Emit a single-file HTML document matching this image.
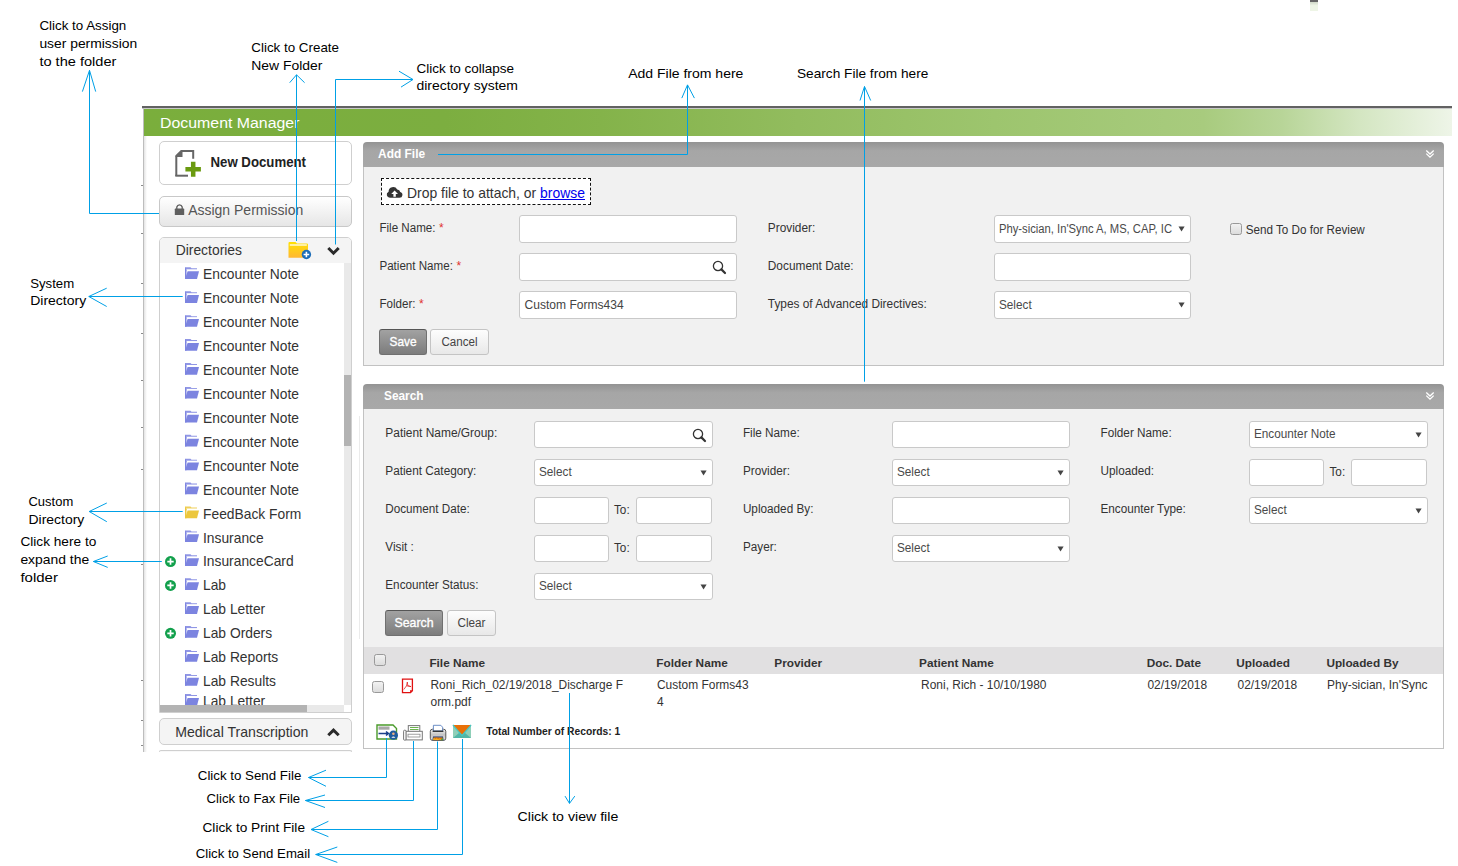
<!DOCTYPE html>
<html><head><meta charset="utf-8"><style>
html,body{margin:0;padding:0;width:1458px;height:866px;overflow:hidden;background:#fff}
body{position:relative;font-family:"Liberation Sans",sans-serif}
svg{font-family:"Liberation Sans",sans-serif}
.a{position:absolute}
</style></head><body>
<div class="a" style="left:1310px;top:0px;width:8px;height:2px;background:#666"></div>
<div class="a" style="left:1310px;top:2px;width:8px;height:9px;background:linear-gradient(#d0d8c8,#eef5e6 40%)"></div>
<div class="a" style="left:142px;top:106px;width:1310px;height:2px;background:#626262"></div>
<div class="a" style="left:142px;top:108px;width:1310px;height:1px;background:#c8c8c8"></div>
<div class="a" style="left:144px;top:109px;width:1308px;height:27px;background:linear-gradient(90deg,#7aae3c 0%,#7cae40 23%,#84b34a 35%,#92bc5e 50%,#9dc56e 65%,#a8cb7e 81%,#b8d598 87%,#d4e6c2 93%,#eef5e8 100%)"></div>
<div class="a" style="left:143px;top:108px;width:1px;height:644px;background:#bdbdbd"></div>
<div class="a" style="left:144px;top:136px;width:3px;height:616px;background:linear-gradient(90deg,#e4e4e4,#fff)"></div>
<div class="a" style="left:141px;top:185px;width:2px;height:1px;background:#8a8a8a"></div>
<div class="a" style="left:141px;top:233px;width:2px;height:1px;background:#8a8a8a"></div>
<div class="a" style="left:141px;top:283px;width:2px;height:1px;background:#8a8a8a"></div>
<div class="a" style="left:141px;top:333px;width:2px;height:1px;background:#8a8a8a"></div>
<div class="a" style="left:141px;top:380px;width:2px;height:1px;background:#8a8a8a"></div>
<div class="a" style="left:141px;top:427px;width:2px;height:1px;background:#8a8a8a"></div>
<div class="a" style="left:141px;top:469px;width:2px;height:1px;background:#8a8a8a"></div>
<div class="a" style="left:141px;top:564px;width:2px;height:1px;background:#8a8a8a"></div>
<div class="a" style="left:141px;top:680px;width:2px;height:1px;background:#8a8a8a"></div>
<div class="a" style="left:141px;top:720px;width:2px;height:1px;background:#8a8a8a"></div>
<div class="a" style="left:141px;top:745px;width:2px;height:1px;background:#8a8a8a"></div>
<div class="a" style="left:159px;top:141px;width:193px;height:44px;box-sizing:border-box;border:1px solid #cfcfcf;border-radius:5px;background:#fff"></div>
<svg class="a" style="left:170px;top:145px" width="40" height="35" viewBox="170 145 40 35">
<path d="M176.3 176 V156 L181.3 151 H193.2 V158.7" fill="none" stroke="#666" stroke-width="2"/>
<path d="M175.3 175.7 H188" stroke="#666" stroke-width="2"/>
<path d="M175.5 156.5 L181 151 L182.5 151 V157 H175.5Z" fill="#666"/>
<path d="M193.2 161.8 V176.7 M185.4 169.2 H200.9" stroke="#6a9a10" stroke-width="4.5"/>
</svg>
<div class="a" style="left:159px;top:196px;width:193px;height:31px;box-sizing:border-box;border:1px solid #c8c8c8;border-radius:5px;background:linear-gradient(#ffffff,#e6e6e6)"></div>
<svg class="a" style="left:172px;top:202px" width="16" height="16" viewBox="172 202 16 16">
<path d="M176.8 209 V207 A2.8 2.8 0 0 1 182.2 207 V209" fill="none" stroke="#5c5c5c" stroke-width="1.3"/>
<rect x="174.8" y="208.6" width="9.4" height="6.4" rx="0.6" fill="#5f5f5f"/>
</svg>
<div class="a" style="left:159px;top:237px;width:193px;height:476px;box-sizing:border-box;border:1px solid #cfcfcf;border-radius:5px 5px 0 0;background:#fff"></div>
<div class="a" style="left:160px;top:238px;width:191px;height:25px;background:#f4f4f4;border-radius:4px 4px 0 0"></div>
<svg class="a" style="left:286px;top:240px" width="28" height="22" viewBox="286 240 28 22">
<defs><linearGradient id="fy" x1="0" y1="0" x2="0" y2="1"><stop offset="0" stop-color="#ffe100"/><stop offset="1" stop-color="#ffb733"/></linearGradient></defs>
<path d="M288.5 243 Q288.5 242 289.5 242 H295.5 L297 243.5 H307 Q308 243.5 308 244.5 V257.8 H288.5Z" fill="url(#fy)"/>
<rect x="289.8" y="244.2" width="17" height="1.6" fill="#fff6c8"/>
<circle cx="306.4" cy="254.5" r="4.7" fill="#1b6cb8"/>
<path d="M306.4 251.7 V257.3 M303.6 254.5 H309.2" stroke="#fff" stroke-width="1.6"/>
</svg>
<svg class="a" style="left:325px;top:244px" width="18" height="14" viewBox="325 244 18 14">
<path d="M328.3 248 L333.5 253.2 L338.7 248" fill="none" stroke="#2a2a2a" stroke-width="3"/>
</svg>
<svg class="a" style="left:160px;top:263px" width="184" height="442" viewBox="160 263 184 442">
<g transform="translate(185,267.00)">
<path d="M0 0.3 H5.5 L6.5 1.3 H12 V4 H0Z" fill="#7c84e0" opacity="0.85"/>
<path d="M1.3 2.3 H12.5 V5 H1.3Z" fill="#fff"/>
<path d="M0 0.3 V12 H1.5 V3 Z" fill="#7c84e0"/>
<path d="M2.6 4.2 H14 L12 12 H0 Z" fill="#7c84e0"/>
</g>
<text x="203" y="279.40" font-size="14.3" fill="#333" textLength="96.03" lengthAdjust="spacingAndGlyphs">Encounter Note</text>
<g transform="translate(185,290.92)">
<path d="M0 0.3 H5.5 L6.5 1.3 H12 V4 H0Z" fill="#7c84e0" opacity="0.85"/>
<path d="M1.3 2.3 H12.5 V5 H1.3Z" fill="#fff"/>
<path d="M0 0.3 V12 H1.5 V3 Z" fill="#7c84e0"/>
<path d="M2.6 4.2 H14 L12 12 H0 Z" fill="#7c84e0"/>
</g>
<text x="203" y="303.32" font-size="14.3" fill="#333" textLength="96.03" lengthAdjust="spacingAndGlyphs">Encounter Note</text>
<g transform="translate(185,314.84)">
<path d="M0 0.3 H5.5 L6.5 1.3 H12 V4 H0Z" fill="#7c84e0" opacity="0.85"/>
<path d="M1.3 2.3 H12.5 V5 H1.3Z" fill="#fff"/>
<path d="M0 0.3 V12 H1.5 V3 Z" fill="#7c84e0"/>
<path d="M2.6 4.2 H14 L12 12 H0 Z" fill="#7c84e0"/>
</g>
<text x="203" y="327.24" font-size="14.3" fill="#333" textLength="96.03" lengthAdjust="spacingAndGlyphs">Encounter Note</text>
<g transform="translate(185,338.76)">
<path d="M0 0.3 H5.5 L6.5 1.3 H12 V4 H0Z" fill="#7c84e0" opacity="0.85"/>
<path d="M1.3 2.3 H12.5 V5 H1.3Z" fill="#fff"/>
<path d="M0 0.3 V12 H1.5 V3 Z" fill="#7c84e0"/>
<path d="M2.6 4.2 H14 L12 12 H0 Z" fill="#7c84e0"/>
</g>
<text x="203" y="351.16" font-size="14.3" fill="#333" textLength="96.03" lengthAdjust="spacingAndGlyphs">Encounter Note</text>
<g transform="translate(185,362.68)">
<path d="M0 0.3 H5.5 L6.5 1.3 H12 V4 H0Z" fill="#7c84e0" opacity="0.85"/>
<path d="M1.3 2.3 H12.5 V5 H1.3Z" fill="#fff"/>
<path d="M0 0.3 V12 H1.5 V3 Z" fill="#7c84e0"/>
<path d="M2.6 4.2 H14 L12 12 H0 Z" fill="#7c84e0"/>
</g>
<text x="203" y="375.08" font-size="14.3" fill="#333" textLength="96.03" lengthAdjust="spacingAndGlyphs">Encounter Note</text>
<g transform="translate(185,386.60)">
<path d="M0 0.3 H5.5 L6.5 1.3 H12 V4 H0Z" fill="#7c84e0" opacity="0.85"/>
<path d="M1.3 2.3 H12.5 V5 H1.3Z" fill="#fff"/>
<path d="M0 0.3 V12 H1.5 V3 Z" fill="#7c84e0"/>
<path d="M2.6 4.2 H14 L12 12 H0 Z" fill="#7c84e0"/>
</g>
<text x="203" y="399.00" font-size="14.3" fill="#333" textLength="96.03" lengthAdjust="spacingAndGlyphs">Encounter Note</text>
<g transform="translate(185,410.52)">
<path d="M0 0.3 H5.5 L6.5 1.3 H12 V4 H0Z" fill="#7c84e0" opacity="0.85"/>
<path d="M1.3 2.3 H12.5 V5 H1.3Z" fill="#fff"/>
<path d="M0 0.3 V12 H1.5 V3 Z" fill="#7c84e0"/>
<path d="M2.6 4.2 H14 L12 12 H0 Z" fill="#7c84e0"/>
</g>
<text x="203" y="422.92" font-size="14.3" fill="#333" textLength="96.03" lengthAdjust="spacingAndGlyphs">Encounter Note</text>
<g transform="translate(185,434.44)">
<path d="M0 0.3 H5.5 L6.5 1.3 H12 V4 H0Z" fill="#7c84e0" opacity="0.85"/>
<path d="M1.3 2.3 H12.5 V5 H1.3Z" fill="#fff"/>
<path d="M0 0.3 V12 H1.5 V3 Z" fill="#7c84e0"/>
<path d="M2.6 4.2 H14 L12 12 H0 Z" fill="#7c84e0"/>
</g>
<text x="203" y="446.84" font-size="14.3" fill="#333" textLength="96.03" lengthAdjust="spacingAndGlyphs">Encounter Note</text>
<g transform="translate(185,458.36)">
<path d="M0 0.3 H5.5 L6.5 1.3 H12 V4 H0Z" fill="#7c84e0" opacity="0.85"/>
<path d="M1.3 2.3 H12.5 V5 H1.3Z" fill="#fff"/>
<path d="M0 0.3 V12 H1.5 V3 Z" fill="#7c84e0"/>
<path d="M2.6 4.2 H14 L12 12 H0 Z" fill="#7c84e0"/>
</g>
<text x="203" y="470.76" font-size="14.3" fill="#333" textLength="96.03" lengthAdjust="spacingAndGlyphs">Encounter Note</text>
<g transform="translate(185,482.28)">
<path d="M0 0.3 H5.5 L6.5 1.3 H12 V4 H0Z" fill="#7c84e0" opacity="0.85"/>
<path d="M1.3 2.3 H12.5 V5 H1.3Z" fill="#fff"/>
<path d="M0 0.3 V12 H1.5 V3 Z" fill="#7c84e0"/>
<path d="M2.6 4.2 H14 L12 12 H0 Z" fill="#7c84e0"/>
</g>
<text x="203" y="494.68" font-size="14.3" fill="#333" textLength="96.03" lengthAdjust="spacingAndGlyphs">Encounter Note</text>
<g transform="translate(185,506.20)">
<path d="M0 0.3 H5.5 L6.5 1.3 H12 V4 H0Z" fill="#ecc73e" opacity="0.85"/>
<path d="M1.3 2.3 H12.5 V5 H1.3Z" fill="#fff"/>
<path d="M0 0.3 V12 H1.5 V3 Z" fill="#ecc73e"/>
<path d="M2.6 4.2 H14 L12 12 H0 Z" fill="#ecc73e"/>
</g>
<text x="203" y="518.60" font-size="14.3" fill="#333" textLength="98.30" lengthAdjust="spacingAndGlyphs">FeedBack Form</text>
<g transform="translate(185,530.12)">
<path d="M0 0.3 H5.5 L6.5 1.3 H12 V4 H0Z" fill="#7c84e0" opacity="0.85"/>
<path d="M1.3 2.3 H12.5 V5 H1.3Z" fill="#fff"/>
<path d="M0 0.3 V12 H1.5 V3 Z" fill="#7c84e0"/>
<path d="M2.6 4.2 H14 L12 12 H0 Z" fill="#7c84e0"/>
</g>
<text x="203" y="542.52" font-size="14.3" fill="#333" textLength="60.69" lengthAdjust="spacingAndGlyphs">Insurance</text>
<g transform="translate(185,554.04)">
<path d="M0 0.3 H5.5 L6.5 1.3 H12 V4 H0Z" fill="#7c84e0" opacity="0.85"/>
<path d="M1.3 2.3 H12.5 V5 H1.3Z" fill="#fff"/>
<path d="M0 0.3 V12 H1.5 V3 Z" fill="#7c84e0"/>
<path d="M2.6 4.2 H14 L12 12 H0 Z" fill="#7c84e0"/>
</g>
<g transform="translate(170.5,561.54)">
<circle cx="0" cy="0" r="5.5" fill="#12a04c"/>
<path d="M0 -3.2 V3.2 M-3.2 0 H3.2" stroke="#fff" stroke-width="1.7"/>
</g>
<text x="203" y="566.44" font-size="14.3" fill="#333" textLength="90.64" lengthAdjust="spacingAndGlyphs">InsuranceCard</text>
<g transform="translate(185,577.96)">
<path d="M0 0.3 H5.5 L6.5 1.3 H12 V4 H0Z" fill="#7c84e0" opacity="0.85"/>
<path d="M1.3 2.3 H12.5 V5 H1.3Z" fill="#fff"/>
<path d="M0 0.3 V12 H1.5 V3 Z" fill="#7c84e0"/>
<path d="M2.6 4.2 H14 L12 12 H0 Z" fill="#7c84e0"/>
</g>
<g transform="translate(170.5,585.46)">
<circle cx="0" cy="0" r="5.5" fill="#12a04c"/>
<path d="M0 -3.2 V3.2 M-3.2 0 H3.2" stroke="#fff" stroke-width="1.7"/>
</g>
<text x="203" y="590.36" font-size="14.3" fill="#333" textLength="23.06" lengthAdjust="spacingAndGlyphs">Lab</text>
<g transform="translate(185,601.88)">
<path d="M0 0.3 H5.5 L6.5 1.3 H12 V4 H0Z" fill="#7c84e0" opacity="0.85"/>
<path d="M1.3 2.3 H12.5 V5 H1.3Z" fill="#fff"/>
<path d="M0 0.3 V12 H1.5 V3 Z" fill="#7c84e0"/>
<path d="M2.6 4.2 H14 L12 12 H0 Z" fill="#7c84e0"/>
</g>
<text x="203" y="614.28" font-size="14.3" fill="#333" textLength="62.23" lengthAdjust="spacingAndGlyphs">Lab Letter</text>
<g transform="translate(185,625.80)">
<path d="M0 0.3 H5.5 L6.5 1.3 H12 V4 H0Z" fill="#7c84e0" opacity="0.85"/>
<path d="M1.3 2.3 H12.5 V5 H1.3Z" fill="#fff"/>
<path d="M0 0.3 V12 H1.5 V3 Z" fill="#7c84e0"/>
<path d="M2.6 4.2 H14 L12 12 H0 Z" fill="#7c84e0"/>
</g>
<g transform="translate(170.5,633.30)">
<circle cx="0" cy="0" r="5.5" fill="#12a04c"/>
<path d="M0 -3.2 V3.2 M-3.2 0 H3.2" stroke="#fff" stroke-width="1.7"/>
</g>
<text x="203" y="638.20" font-size="14.3" fill="#333" textLength="69.13" lengthAdjust="spacingAndGlyphs">Lab Orders</text>
<g transform="translate(185,649.72)">
<path d="M0 0.3 H5.5 L6.5 1.3 H12 V4 H0Z" fill="#7c84e0" opacity="0.85"/>
<path d="M1.3 2.3 H12.5 V5 H1.3Z" fill="#fff"/>
<path d="M0 0.3 V12 H1.5 V3 Z" fill="#7c84e0"/>
<path d="M2.6 4.2 H14 L12 12 H0 Z" fill="#7c84e0"/>
</g>
<text x="203" y="662.12" font-size="14.3" fill="#333" textLength="75.28" lengthAdjust="spacingAndGlyphs">Lab Reports</text>
<g transform="translate(185,673.64)">
<path d="M0 0.3 H5.5 L6.5 1.3 H12 V4 H0Z" fill="#7c84e0" opacity="0.85"/>
<path d="M1.3 2.3 H12.5 V5 H1.3Z" fill="#fff"/>
<path d="M0 0.3 V12 H1.5 V3 Z" fill="#7c84e0"/>
<path d="M2.6 4.2 H14 L12 12 H0 Z" fill="#7c84e0"/>
</g>
<text x="203" y="686.04" font-size="14.3" fill="#333" textLength="72.98" lengthAdjust="spacingAndGlyphs">Lab Results</text>
<g transform="translate(185,693.70)">
<path d="M0 0.3 H5.5 L6.5 1.3 H12 V4 H0Z" fill="#7c84e0" opacity="0.85"/>
<path d="M1.3 2.3 H12.5 V5 H1.3Z" fill="#fff"/>
<path d="M0 0.3 V12 H1.5 V3 Z" fill="#7c84e0"/>
<path d="M2.6 4.2 H14 L12 12 H0 Z" fill="#7c84e0"/>
</g>
<text x="203" y="706.10" font-size="14.3" fill="#333" textLength="62.23" lengthAdjust="spacingAndGlyphs">Lab Letter</text>
</svg>
<div class="a" style="left:344px;top:263px;width:7px;height:442px;background:#e9e9e9"></div>
<div class="a" style="left:344px;top:375px;width:7px;height:71px;background:#b3b3b3"></div>
<div class="a" style="left:160px;top:705px;width:184px;height:7px;background:#e9e9e9"></div>
<div class="a" style="left:160px;top:705px;width:147px;height:7px;background:#b3b3b3"></div>
<div class="a" style="left:344px;top:705px;width:7px;height:7px;background:#fff"></div>
<div class="a" style="left:159px;top:718px;width:193px;height:27px;box-sizing:border-box;border:1px solid #cfcfcf;border-radius:5px;background:#f4f4f4"></div>
<svg class="a" style="left:325px;top:724px" width="18" height="14" viewBox="325 724 18 14">
<path d="M328.3 735.3 L333.5 730.1 L338.7 735.3" fill="none" stroke="#2a2a2a" stroke-width="3"/>
</svg>
<div class="a" style="left:159px;top:750px;width:193px;height:2px;box-sizing:border-box;border-top:1px solid #cfcfcf;border-left:1px solid #cfcfcf;border-right:1px solid #cfcfcf;border-radius:5px 5px 0 0;background:#f8f8f8"></div>
<div class="a" style="left:363px;top:142px;width:1081px;height:25px;background:linear-gradient(#939393,#a6a6a6 35%,#a8a8a8);border-radius:4px 4px 0 0"></div>
<svg class="a" style="left:1424px;top:147.5px" width="12" height="12" viewBox="0 0 12 12">
<path d="M2.3 2.5 L6 6 L9.7 2.5 M2.3 5.6 L6 9.1 L9.7 5.6" fill="none" stroke="#fff" stroke-width="1.3"/>
</svg>
<div class="a" style="left:363px;top:167px;width:1081px;height:199px;box-sizing:border-box;border:1px solid #c2c2c2;border-top:none;background:#f1f1f1"></div>
<div class="a" style="left:381px;top:178px;width:210px;height:27px;box-sizing:border-box;border:1px dashed #111;background:#fff"></div>
<svg class="a" style="left:386px;top:186px" width="18" height="13" viewBox="386 186 18 13">
<path d="M390 197.8 A3.2 3.2 0 0 1 388.6 191.7 A4.6 4.6 0 0 1 397.2 189.4 A3 3 0 0 1 400.2 191.9 A3 3 0 0 1 399.5 197.8Z" fill="#333"/>
<path d="M394.6 190.5 L391.2 193.9 H393.4 V196.8 H395.8 V193.9 H398Z" fill="#fff"/>
</svg>
<div class="a" style="left:540px;top:199px;width:45px;height:1px;background:#0000ee"></div>
<div class="a" style="left:519px;top:215px;width:218px;height:28px;box-sizing:border-box;border:1px solid #c9c9c9;border-radius:3px;background:#fff;"></div>
<div class="a" style="left:519px;top:253px;width:218px;height:28px;box-sizing:border-box;border:1px solid #c9c9c9;border-radius:3px;background:#fff;"></div>
<svg class="a" style="left:710.8px;top:258.9px" width="16" height="16" viewBox="-7 -7 16 16">
<circle cx="0" cy="0" r="4.6" fill="none" stroke="#333" stroke-width="1.3"/>
<path d="M3.4 3.4 L7 7" stroke="#333" stroke-width="2.2" stroke-linecap="round"/>
</svg>
<div class="a" style="left:519px;top:291px;width:218px;height:28px;box-sizing:border-box;border:1px solid #c9c9c9;border-radius:3px;background:#fff;"></div>
<div class="a" style="left:379px;top:329px;width:48px;height:26px;box-sizing:border-box;border:1px solid #707070;border-top-color:#555;border-radius:3px;background:linear-gradient(#a2a2a2,#7c7c7c)"></div>
<div class="a" style="left:430px;top:329px;width:59px;height:26px;box-sizing:border-box;border:1px solid #c4c4c4;border-radius:3px;background:linear-gradient(#fdfdfd,#e8e8e8)"></div>
<div class="a" style="left:994px;top:215px;width:197px;height:28px;box-sizing:border-box;border:1px solid #c9c9c9;border-radius:3px;background:#fff;"></div>
<svg class="a" style="left:1177.5px;top:226.0px" width="8" height="7" viewBox="0 0 8 7"><path d="M0.5 0.4 H6.6 L3.55 5.6Z" fill="#444"/></svg>
<div class="a" style="left:994px;top:253px;width:197px;height:28px;box-sizing:border-box;border:1px solid #c9c9c9;border-radius:3px;background:#fff;"></div>
<div class="a" style="left:994px;top:291px;width:197px;height:28px;box-sizing:border-box;border:1px solid #c9c9c9;border-radius:3px;background:#fff;"></div>
<svg class="a" style="left:1177.5px;top:302.0px" width="8" height="7" viewBox="0 0 8 7"><path d="M0.5 0.4 H6.6 L3.55 5.6Z" fill="#444"/></svg>
<div class="a" style="left:1230px;top:223px;width:12px;height:12px;box-sizing:border-box;border:1px solid #999;border-radius:2.5px;background:linear-gradient(#f2f2f2,#dcdcdc)"></div>
<div class="a" style="left:359px;top:416px;width:1px;height:223px;background:#ebebeb"></div>
<div class="a" style="left:363px;top:384px;width:1081px;height:25px;background:linear-gradient(#939393,#a6a6a6 35%,#a8a8a8);border-radius:4px 4px 0 0"></div>
<svg class="a" style="left:1424px;top:389.5px" width="12" height="12" viewBox="0 0 12 12">
<path d="M2.3 2.5 L6 6 L9.7 2.5 M2.3 5.6 L6 9.1 L9.7 5.6" fill="none" stroke="#fff" stroke-width="1.3"/>
</svg>
<div class="a" style="left:363px;top:409px;width:1081px;height:340px;box-sizing:border-box;border:1px solid #c2c2c2;border-top:none;background:#f1f1f1"></div>
<div class="a" style="left:534px;top:421px;width:179px;height:27px;box-sizing:border-box;border:1px solid #c9c9c9;border-radius:3px;background:#fff;"></div>
<svg class="a" style="left:690.5px;top:427px" width="16" height="16" viewBox="-7 -7 16 16">
<circle cx="0" cy="0" r="4.6" fill="none" stroke="#333" stroke-width="1.3"/>
<path d="M3.4 3.4 L7 7" stroke="#333" stroke-width="2.2" stroke-linecap="round"/>
</svg>
<div class="a" style="left:534px;top:459px;width:179px;height:27px;box-sizing:border-box;border:1px solid #c9c9c9;border-radius:3px;background:#fff;"></div>
<svg class="a" style="left:699.5px;top:469.5px" width="8" height="7" viewBox="0 0 8 7"><path d="M0.5 0.4 H6.6 L3.55 5.6Z" fill="#444"/></svg>
<div class="a" style="left:534px;top:497px;width:75px;height:27px;box-sizing:border-box;border:1px solid #c9c9c9;border-radius:3px;background:#fff;"></div>
<div class="a" style="left:636px;top:497px;width:76px;height:27px;box-sizing:border-box;border:1px solid #c9c9c9;border-radius:3px;background:#fff;"></div>
<div class="a" style="left:534px;top:535px;width:75px;height:27px;box-sizing:border-box;border:1px solid #c9c9c9;border-radius:3px;background:#fff;"></div>
<div class="a" style="left:636px;top:535px;width:76px;height:27px;box-sizing:border-box;border:1px solid #c9c9c9;border-radius:3px;background:#fff;"></div>
<div class="a" style="left:534px;top:573px;width:179px;height:27px;box-sizing:border-box;border:1px solid #c9c9c9;border-radius:3px;background:#fff;"></div>
<svg class="a" style="left:699.5px;top:583.5px" width="8" height="7" viewBox="0 0 8 7"><path d="M0.5 0.4 H6.6 L3.55 5.6Z" fill="#444"/></svg>
<div class="a" style="left:385px;top:610px;width:58px;height:26px;box-sizing:border-box;border:1px solid #707070;border-top-color:#555;border-radius:3px;background:linear-gradient(#a2a2a2,#7c7c7c)"></div>
<div class="a" style="left:447px;top:610px;width:49px;height:26px;box-sizing:border-box;border:1px solid #c4c4c4;border-radius:3px;background:linear-gradient(#fdfdfd,#e8e8e8)"></div>
<div class="a" style="left:892px;top:421px;width:178px;height:27px;box-sizing:border-box;border:1px solid #c9c9c9;border-radius:3px;background:#fff;"></div>
<div class="a" style="left:892px;top:459px;width:178px;height:27px;box-sizing:border-box;border:1px solid #c9c9c9;border-radius:3px;background:#fff;"></div>
<svg class="a" style="left:1056.5px;top:469.5px" width="8" height="7" viewBox="0 0 8 7"><path d="M0.5 0.4 H6.6 L3.55 5.6Z" fill="#444"/></svg>
<div class="a" style="left:892px;top:497px;width:178px;height:27px;box-sizing:border-box;border:1px solid #c9c9c9;border-radius:3px;background:#fff;"></div>
<div class="a" style="left:892px;top:535px;width:178px;height:27px;box-sizing:border-box;border:1px solid #c9c9c9;border-radius:3px;background:#fff;"></div>
<svg class="a" style="left:1056.5px;top:545.5px" width="8" height="7" viewBox="0 0 8 7"><path d="M0.5 0.4 H6.6 L3.55 5.6Z" fill="#444"/></svg>
<div class="a" style="left:1249px;top:421px;width:179px;height:27px;box-sizing:border-box;border:1px solid #c9c9c9;border-radius:3px;background:#fff;"></div>
<svg class="a" style="left:1414.5px;top:431.5px" width="8" height="7" viewBox="0 0 8 7"><path d="M0.5 0.4 H6.6 L3.55 5.6Z" fill="#444"/></svg>
<div class="a" style="left:1249px;top:459px;width:75px;height:27px;box-sizing:border-box;border:1px solid #c9c9c9;border-radius:3px;background:#fff;"></div>
<div class="a" style="left:1351px;top:459px;width:76px;height:27px;box-sizing:border-box;border:1px solid #c9c9c9;border-radius:3px;background:#fff;"></div>
<div class="a" style="left:1249px;top:497px;width:179px;height:27px;box-sizing:border-box;border:1px solid #c9c9c9;border-radius:3px;background:#fff;"></div>
<svg class="a" style="left:1414.5px;top:507.5px" width="8" height="7" viewBox="0 0 8 7"><path d="M0.5 0.4 H6.6 L3.55 5.6Z" fill="#444"/></svg>
<div class="a" style="left:364px;top:647px;width:1079px;height:27px;background:#e1e0e1"></div>
<div class="a" style="left:364px;top:674px;width:1079px;height:74px;background:#fff"></div>
<div class="a" style="left:374px;top:654px;width:12px;height:12px;box-sizing:border-box;border:1px solid #999;border-radius:2.5px;background:linear-gradient(#f2f2f2,#dcdcdc)"></div>
<div class="a" style="left:372px;top:681px;width:12px;height:12px;box-sizing:border-box;border:1px solid #999;border-radius:2.5px;background:linear-gradient(#f2f2f2,#dcdcdc)"></div>
<svg class="a" style="left:401px;top:678px" width="14" height="16" viewBox="401 678 14 16">
<path d="M402.5 679.2 H412.4 V690.8 L410.5 692.6 H402.5Z" fill="#fff" stroke="#e01010" stroke-width="1.3"/>
<path d="M410 692.6 V690.3 H412.4Z" fill="#e01010"/>
<path d="M403.8 689.5 L406.5 685.8 L407.3 682 L407.8 685.6 L411 686.6 L406.5 685.8" fill="none" stroke="#e01010" stroke-width="0.7"/>
</svg>
<svg class="a" style="left:374px;top:722px" width="26" height="20" viewBox="374 722 26 20">
<path d="M377 725 H393 L396.5 728.5 V739 H377Z" fill="#fff" stroke="#4a9a2a" stroke-width="1.4"/>
<rect x="378.5" y="726.5" width="11" height="3.2" fill="#a8a8a8"/>
<path d="M378.5 733.5 H388 M386 731.5 L388.5 733.5 L386 735.5" fill="none" stroke="#1b3f8a" stroke-width="1.5"/>
<circle cx="393.4" cy="735.2" r="4.6" fill="#1d5d9c"/>
<circle cx="393.4" cy="733.8" r="1.3" fill="#f0b080"/>
<path d="M391.4 737.8 Q393.4 735 395.4 737.8Z" fill="#fff"/>
</svg>
<svg class="a" style="left:402px;top:724px" width="23" height="18" viewBox="402 724 23 18">
<rect x="408.3" y="725.6" width="11.5" height="6" fill="#fff" stroke="#777" stroke-width="1"/>
<path d="M410 727.5 H418.5 M410 729.5 H418.5" stroke="#5aaa3a" stroke-width="0.9"/>
<rect x="405.8" y="731.3" width="16.5" height="8.6" fill="#fff" stroke="#777" stroke-width="1"/>
<rect x="403.6" y="730.2" width="2.4" height="10" rx="1" fill="#fff" stroke="#777" stroke-width="1"/>
<rect x="408" y="734.2" width="12" height="2.8" fill="none" stroke="#888" stroke-width="0.8"/>
</svg>
<svg class="a" style="left:428px;top:724px" width="20" height="18" viewBox="428 724 20 18">
<defs><linearGradient id="pg" x1="0" y1="0" x2="0" y2="1"><stop offset="0" stop-color="#f4f4f4"/><stop offset="0.5" stop-color="#c4c4c4"/><stop offset="1" stop-color="#e8e8e8"/></linearGradient></defs>
<rect x="430.3" y="729.2" width="15.5" height="11.2" rx="2.2" fill="url(#pg)" stroke="#4a4a4a" stroke-width="0.9"/>
<path d="M433.4 725.3 H440.8 L442.6 727.2 V731 H433.4Z" fill="#fff" stroke="#5a80c0" stroke-width="0.9"/>
<rect x="432.6" y="730.6" width="10.8" height="1.3" fill="#2a2a2a"/>
<path d="M433 736.4 H443 L443.6 740.6 H432.4Z" fill="#1a2a70"/>
<path d="M433.4 737.6 H442.6 L443 740.2 H433Z" fill="#f2b020"/>
<path d="M434.5 738.8 L436.5 737.9 L439.5 739 L442 738.4" stroke="#e06010" stroke-width="0.9" fill="none"/>
<path d="M440.5 740.2 L442.6 737.8 L443 740.2Z" fill="#40a040"/>
</svg>
<svg class="a" style="left:452px;top:724px" width="21" height="16" viewBox="452 724 21 16">
<rect x="453" y="725" width="18" height="13" fill="#8fcfb8"/>
<path d="M453 738 L462 730.5 L471 738Z" fill="#52b6a6"/>
<path d="M453 725 L462 735.2 L471 725" fill="none" stroke="#44c8c8" stroke-width="1.6"/>
<path d="M453.6 725 L462 734.6 L470.4 725Z" fill="#e87008"/>
</svg>
<svg class="a" style="left:0;top:0" width="1458" height="866" viewBox="0 0 1458 866" font-family="Liberation Sans, sans-serif">
<text x="160.00" y="127.80" font-size="15.40" fill="#fff" textLength="139.50" lengthAdjust="spacingAndGlyphs">Document Manager</text>
<text x="210.50" y="166.80" font-size="13.80" fill="#222" font-weight="bold" textLength="95.50" lengthAdjust="spacingAndGlyphs">New Document</text>
<text x="188.20" y="215.00" font-size="14.40" fill="#555" textLength="115.00" lengthAdjust="spacingAndGlyphs">Assign Permission</text>
<text x="175.70" y="255.20" font-size="14.40" fill="#333" textLength="66.30" lengthAdjust="spacingAndGlyphs">Directories</text>
<text x="175.20" y="737.20" font-size="14.40" fill="#333" textLength="133.20" lengthAdjust="spacingAndGlyphs">Medical Transcription</text>
<text x="378.10" y="158.00" font-size="12.60" fill="#fff" font-weight="bold" textLength="47.00" lengthAdjust="spacingAndGlyphs">Add File</text>
<text x="407.00" y="197.80" font-size="14.20" fill="#333" textLength="129.20" lengthAdjust="spacingAndGlyphs">Drop file to attach, or</text>
<text x="540.07" y="197.80" font-size="14.20" fill="#0000ee" textLength="44.87" lengthAdjust="spacingAndGlyphs">browse</text>
<text x="379.40" y="232.10" font-size="12.30" fill="#333" textLength="56.08" lengthAdjust="spacingAndGlyphs">File Name:</text>
<text x="438.98" y="232.10" font-size="12.00" fill="#e0312f">*</text>
<text x="379.40" y="270.30" font-size="12.30" fill="#333" textLength="73.50" lengthAdjust="spacingAndGlyphs">Patient Name:</text>
<text x="456.40" y="270.30" font-size="12.00" fill="#e0312f">*</text>
<text x="379.40" y="308.30" font-size="12.30" fill="#333" textLength="36.10" lengthAdjust="spacingAndGlyphs">Folder:</text>
<text x="419.00" y="308.30" font-size="12.00" fill="#e0312f">*</text>
<text x="524.60" y="308.50" font-size="12.30" fill="#444" textLength="99.00" lengthAdjust="spacingAndGlyphs">Custom Forms434</text>
<text x="389.50" y="346.20" font-size="12.60" fill="#fff" textLength="27.00" lengthAdjust="spacingAndGlyphs" stroke="#fff" stroke-width="0.35">Save</text>
<text x="441.50" y="346.20" font-size="12.30" fill="#444" textLength="36.00" lengthAdjust="spacingAndGlyphs">Cancel</text>
<text x="767.80" y="232.10" font-size="12.30" fill="#333" textLength="47.49" lengthAdjust="spacingAndGlyphs">Provider:</text>
<text x="767.80" y="270.30" font-size="12.30" fill="#333" textLength="85.76" lengthAdjust="spacingAndGlyphs">Document Date:</text>
<text x="767.80" y="308.30" font-size="12.30" fill="#333" textLength="159.00" lengthAdjust="spacingAndGlyphs">Types of Advanced Directives:</text>
<text x="999.00" y="233.20" font-size="12.30" fill="#4a4a4a" textLength="173.00" lengthAdjust="spacingAndGlyphs">Phy-sician, In'Sync A, MS, CAP, IC</text>
<text x="999.00" y="309.20" font-size="12.30" fill="#4a4a4a" textLength="32.66" lengthAdjust="spacingAndGlyphs">Select</text>
<text x="1245.80" y="234.20" font-size="12.30" fill="#333" textLength="119.00" lengthAdjust="spacingAndGlyphs">Send To Do for Review</text>
<text x="384.00" y="400.20" font-size="12.40" fill="#fff" font-weight="bold" textLength="39.50" lengthAdjust="spacingAndGlyphs">Search</text>
<text x="385.30" y="437.00" font-size="12.30" fill="#333" textLength="112.00" lengthAdjust="spacingAndGlyphs">Patient Name/Group:</text>
<text x="385.30" y="475.00" font-size="12.30" fill="#333" textLength="91.10" lengthAdjust="spacingAndGlyphs">Patient Category:</text>
<text x="385.30" y="513.00" font-size="12.30" fill="#333" textLength="84.50" lengthAdjust="spacingAndGlyphs">Document Date:</text>
<text x="385.30" y="551.00" font-size="12.30" fill="#333" textLength="28.50" lengthAdjust="spacingAndGlyphs">Visit :</text>
<text x="385.30" y="589.00" font-size="12.30" fill="#333" textLength="93.20" lengthAdjust="spacingAndGlyphs">Encounter Status:</text>
<text x="539.00" y="475.70" font-size="12.30" fill="#4a4a4a" textLength="32.66" lengthAdjust="spacingAndGlyphs">Select</text>
<text x="614.00" y="513.50" font-size="12.30" fill="#333" textLength="15.67" lengthAdjust="spacingAndGlyphs">To:</text>
<text x="614.00" y="551.50" font-size="12.30" fill="#333" textLength="15.67" lengthAdjust="spacingAndGlyphs">To:</text>
<text x="539.00" y="589.70" font-size="12.30" fill="#4a4a4a" textLength="32.66" lengthAdjust="spacingAndGlyphs">Select</text>
<text x="394.50" y="627.20" font-size="12.60" fill="#fff" textLength="39.00" lengthAdjust="spacingAndGlyphs" stroke="#fff" stroke-width="0.35">Search</text>
<text x="457.50" y="627.20" font-size="12.30" fill="#444" textLength="28.00" lengthAdjust="spacingAndGlyphs">Clear</text>
<text x="742.90" y="437.00" font-size="12.30" fill="#333" textLength="56.80" lengthAdjust="spacingAndGlyphs">File Name:</text>
<text x="742.90" y="475.00" font-size="12.30" fill="#333" textLength="47.01" lengthAdjust="spacingAndGlyphs">Provider:</text>
<text x="742.90" y="513.00" font-size="12.30" fill="#333" textLength="70.54" lengthAdjust="spacingAndGlyphs">Uploaded By:</text>
<text x="742.90" y="551.00" font-size="12.30" fill="#333" textLength="33.96" lengthAdjust="spacingAndGlyphs">Payer:</text>
<text x="897.00" y="475.70" font-size="12.30" fill="#4a4a4a" textLength="32.66" lengthAdjust="spacingAndGlyphs">Select</text>
<text x="897.00" y="551.70" font-size="12.30" fill="#4a4a4a" textLength="32.66" lengthAdjust="spacingAndGlyphs">Select</text>
<text x="1100.50" y="437.00" font-size="12.30" fill="#333" textLength="71.17" lengthAdjust="spacingAndGlyphs">Folder Name:</text>
<text x="1100.50" y="475.00" font-size="12.30" fill="#333" textLength="53.57" lengthAdjust="spacingAndGlyphs">Uploaded:</text>
<text x="1100.50" y="513.00" font-size="12.30" fill="#333" textLength="85.35" lengthAdjust="spacingAndGlyphs">Encounter Type:</text>
<text x="1254.00" y="437.70" font-size="12.30" fill="#4a4a4a" textLength="81.64" lengthAdjust="spacingAndGlyphs">Encounter Note</text>
<text x="1329.50" y="475.50" font-size="12.30" fill="#333" textLength="15.67" lengthAdjust="spacingAndGlyphs">To:</text>
<text x="1254.00" y="513.70" font-size="12.30" fill="#4a4a4a" textLength="32.66" lengthAdjust="spacingAndGlyphs">Select</text>
<text x="429.40" y="666.80" font-size="11.80" fill="#333" font-weight="bold">File Name</text>
<text x="656.30" y="666.80" font-size="11.80" fill="#333" font-weight="bold">Folder Name</text>
<text x="774.30" y="666.80" font-size="11.80" fill="#333" font-weight="bold">Provider</text>
<text x="919.10" y="666.80" font-size="11.80" fill="#333" font-weight="bold">Patient Name</text>
<text x="1146.70" y="666.80" font-size="11.80" fill="#333" font-weight="bold">Doc. Date</text>
<text x="1236.30" y="666.80" font-size="11.80" fill="#333" font-weight="bold">Uploaded</text>
<text x="1326.40" y="666.80" font-size="11.80" fill="#333" font-weight="bold">Uploaded By</text>
<text x="430.50" y="688.70" font-size="11.95" fill="#333">Roni_Rich_02/19/2018_Discharge F</text>
<text x="430.50" y="706.00" font-size="11.95" fill="#333">orm.pdf</text>
<text x="657.00" y="688.70" font-size="11.95" fill="#333">Custom Forms43</text>
<text x="657.00" y="706.00" font-size="11.95" fill="#333">4</text>
<text x="921.10" y="688.70" font-size="11.95" fill="#333">Roni, Rich - 10/10/1980</text>
<text x="1147.40" y="688.70" font-size="11.95" fill="#333">02/19/2018</text>
<text x="1237.50" y="688.70" font-size="11.95" fill="#333">02/19/2018</text>
<text x="1327.10" y="688.70" font-size="11.95" fill="#333">Phy-sician, In'Sync</text>
<text x="486.20" y="735.00" font-size="11.00" fill="#222" font-weight="bold" textLength="134.00" lengthAdjust="spacingAndGlyphs">Total Number of Records: 1</text>
<text x="39.40" y="29.80" font-size="13.30" fill="#000" textLength="86.90" lengthAdjust="spacingAndGlyphs">Click to Assign</text>
<text x="39.40" y="47.70" font-size="13.30" fill="#000" textLength="97.80" lengthAdjust="spacingAndGlyphs">user permission</text>
<text x="39.40" y="65.60" font-size="13.30" fill="#000" textLength="77.00" lengthAdjust="spacingAndGlyphs">to the folder</text>
<text x="251.30" y="51.90" font-size="13.30" fill="#000" textLength="87.70" lengthAdjust="spacingAndGlyphs">Click to Create</text>
<text x="251.30" y="69.80" font-size="13.30" fill="#000" textLength="71.20" lengthAdjust="spacingAndGlyphs">New Folder</text>
<text x="416.40" y="72.80" font-size="13.30" fill="#000" textLength="97.70" lengthAdjust="spacingAndGlyphs">Click to collapse</text>
<text x="416.40" y="90.30" font-size="13.30" fill="#000" textLength="101.60" lengthAdjust="spacingAndGlyphs">directory system</text>
<text x="628.20" y="78.30" font-size="13.30" fill="#000" textLength="115.20" lengthAdjust="spacingAndGlyphs">Add File from here</text>
<text x="797.00" y="77.60" font-size="13.30" fill="#000" textLength="131.30" lengthAdjust="spacingAndGlyphs">Search File from here</text>
<text x="30.20" y="287.60" font-size="13.30" fill="#000" textLength="44.00" lengthAdjust="spacingAndGlyphs">System</text>
<text x="30.20" y="305.20" font-size="13.30" fill="#000" textLength="56.00" lengthAdjust="spacingAndGlyphs">Directory</text>
<text x="28.50" y="505.80" font-size="13.30" fill="#000" textLength="44.70" lengthAdjust="spacingAndGlyphs">Custom</text>
<text x="28.50" y="523.80" font-size="13.30" fill="#000" textLength="55.80" lengthAdjust="spacingAndGlyphs">Directory</text>
<text x="20.40" y="546.20" font-size="13.30" fill="#000" textLength="75.90" lengthAdjust="spacingAndGlyphs">Click here to</text>
<text x="20.40" y="564.20" font-size="13.30" fill="#000" textLength="68.80" lengthAdjust="spacingAndGlyphs">expand the</text>
<text x="20.40" y="582.10" font-size="13.30" fill="#000" textLength="37.50" lengthAdjust="spacingAndGlyphs">folder</text>
<text x="197.80" y="780.10" font-size="13.30" fill="#000" textLength="103.50" lengthAdjust="spacingAndGlyphs">Click to Send File</text>
<text x="206.60" y="803.40" font-size="13.30" fill="#000" textLength="93.60" lengthAdjust="spacingAndGlyphs">Click to Fax File</text>
<text x="202.50" y="831.60" font-size="13.30" fill="#000" textLength="102.50" lengthAdjust="spacingAndGlyphs">Click to Print File</text>
<text x="195.70" y="858.30" font-size="13.30" fill="#000" textLength="114.40" lengthAdjust="spacingAndGlyphs">Click to Send Email</text>
<text x="517.50" y="820.60" font-size="13.30" fill="#000" textLength="100.80" lengthAdjust="spacingAndGlyphs">Click to view file</text>
</svg>
<svg class="a" style="left:0;top:0" width="1458" height="866" viewBox="0 0 1458 866">
<path d="M89.5 70.3 V213.5 H159" fill="none" stroke="#00a0e6" stroke-width="1"/>
<path d="M82.4 91.6 L89.5 70.3 L95.7 91.6" fill="none" stroke="#00a0e6" stroke-width="1"/>
<path d="M296.5 74.8 V241" fill="none" stroke="#00a0e6" stroke-width="1"/>
<path d="M289.7 82.7 L296.5 74.8 L304.6 82.7" fill="none" stroke="#00a0e6" stroke-width="1"/>
<path d="M335.5 244.5 V79.5 H413" fill="none" stroke="#00a0e6" stroke-width="1"/>
<path d="M399 71.2 L413 79.5 L401 87.1" fill="none" stroke="#00a0e6" stroke-width="1"/>
<path d="M438 154.5 H687.5 V84.9" fill="none" stroke="#00a0e6" stroke-width="1"/>
<path d="M681.8 98.1 L687.5 84.9 L694.4 98.1" fill="none" stroke="#00a0e6" stroke-width="1"/>
<path d="M864.5 86.5 V381.7" fill="none" stroke="#00a0e6" stroke-width="1"/>
<path d="M860 100.5 L864.5 86.5 L870.7 100.5" fill="none" stroke="#00a0e6" stroke-width="1"/>
<path d="M88.8 296.5 H182.7" fill="none" stroke="#00a0e6" stroke-width="1"/>
<path d="M106.7 288.2 L88.8 296.5 L106.7 306.5" fill="none" stroke="#00a0e6" stroke-width="1"/>
<path d="M89.2 511.5 H182.7" fill="none" stroke="#00a0e6" stroke-width="1"/>
<path d="M106.8 503 L89.2 511.5 L106.8 521.7" fill="none" stroke="#00a0e6" stroke-width="1"/>
<path d="M93.4 561.5 H161.8" fill="none" stroke="#00a0e6" stroke-width="1"/>
<path d="M107.7 556 L93.4 561.5 L107.7 567.4" fill="none" stroke="#00a0e6" stroke-width="1"/>
<path d="M308.5 777.5 H386.5 V738" fill="none" stroke="#00a0e6" stroke-width="1"/>
<path d="M326 770.2 L308.5 777.5 L326 786.3" fill="none" stroke="#00a0e6" stroke-width="1"/>
<path d="M305.4 800.5 H413.5 V741" fill="none" stroke="#00a0e6" stroke-width="1"/>
<path d="M325 795 L305.4 800.5 L325 807.5" fill="none" stroke="#00a0e6" stroke-width="1"/>
<path d="M311 829.5 H437.5 V741.5" fill="none" stroke="#00a0e6" stroke-width="1"/>
<path d="M328.4 821.3 L311 829.5 L328.4 836.7" fill="none" stroke="#00a0e6" stroke-width="1"/>
<path d="M315.7 854.5 H462.5 V739" fill="none" stroke="#00a0e6" stroke-width="1"/>
<path d="M337.3 847 L315.7 854.5 L337.3 862.4" fill="none" stroke="#00a0e6" stroke-width="1"/>
<path d="M569.5 693 V803.4" fill="none" stroke="#00a0e6" stroke-width="1"/>
<path d="M565 796.1 L569.5 803.4 L574.8 796.1" fill="none" stroke="#00a0e6" stroke-width="1"/>
</svg>
</body></html>
